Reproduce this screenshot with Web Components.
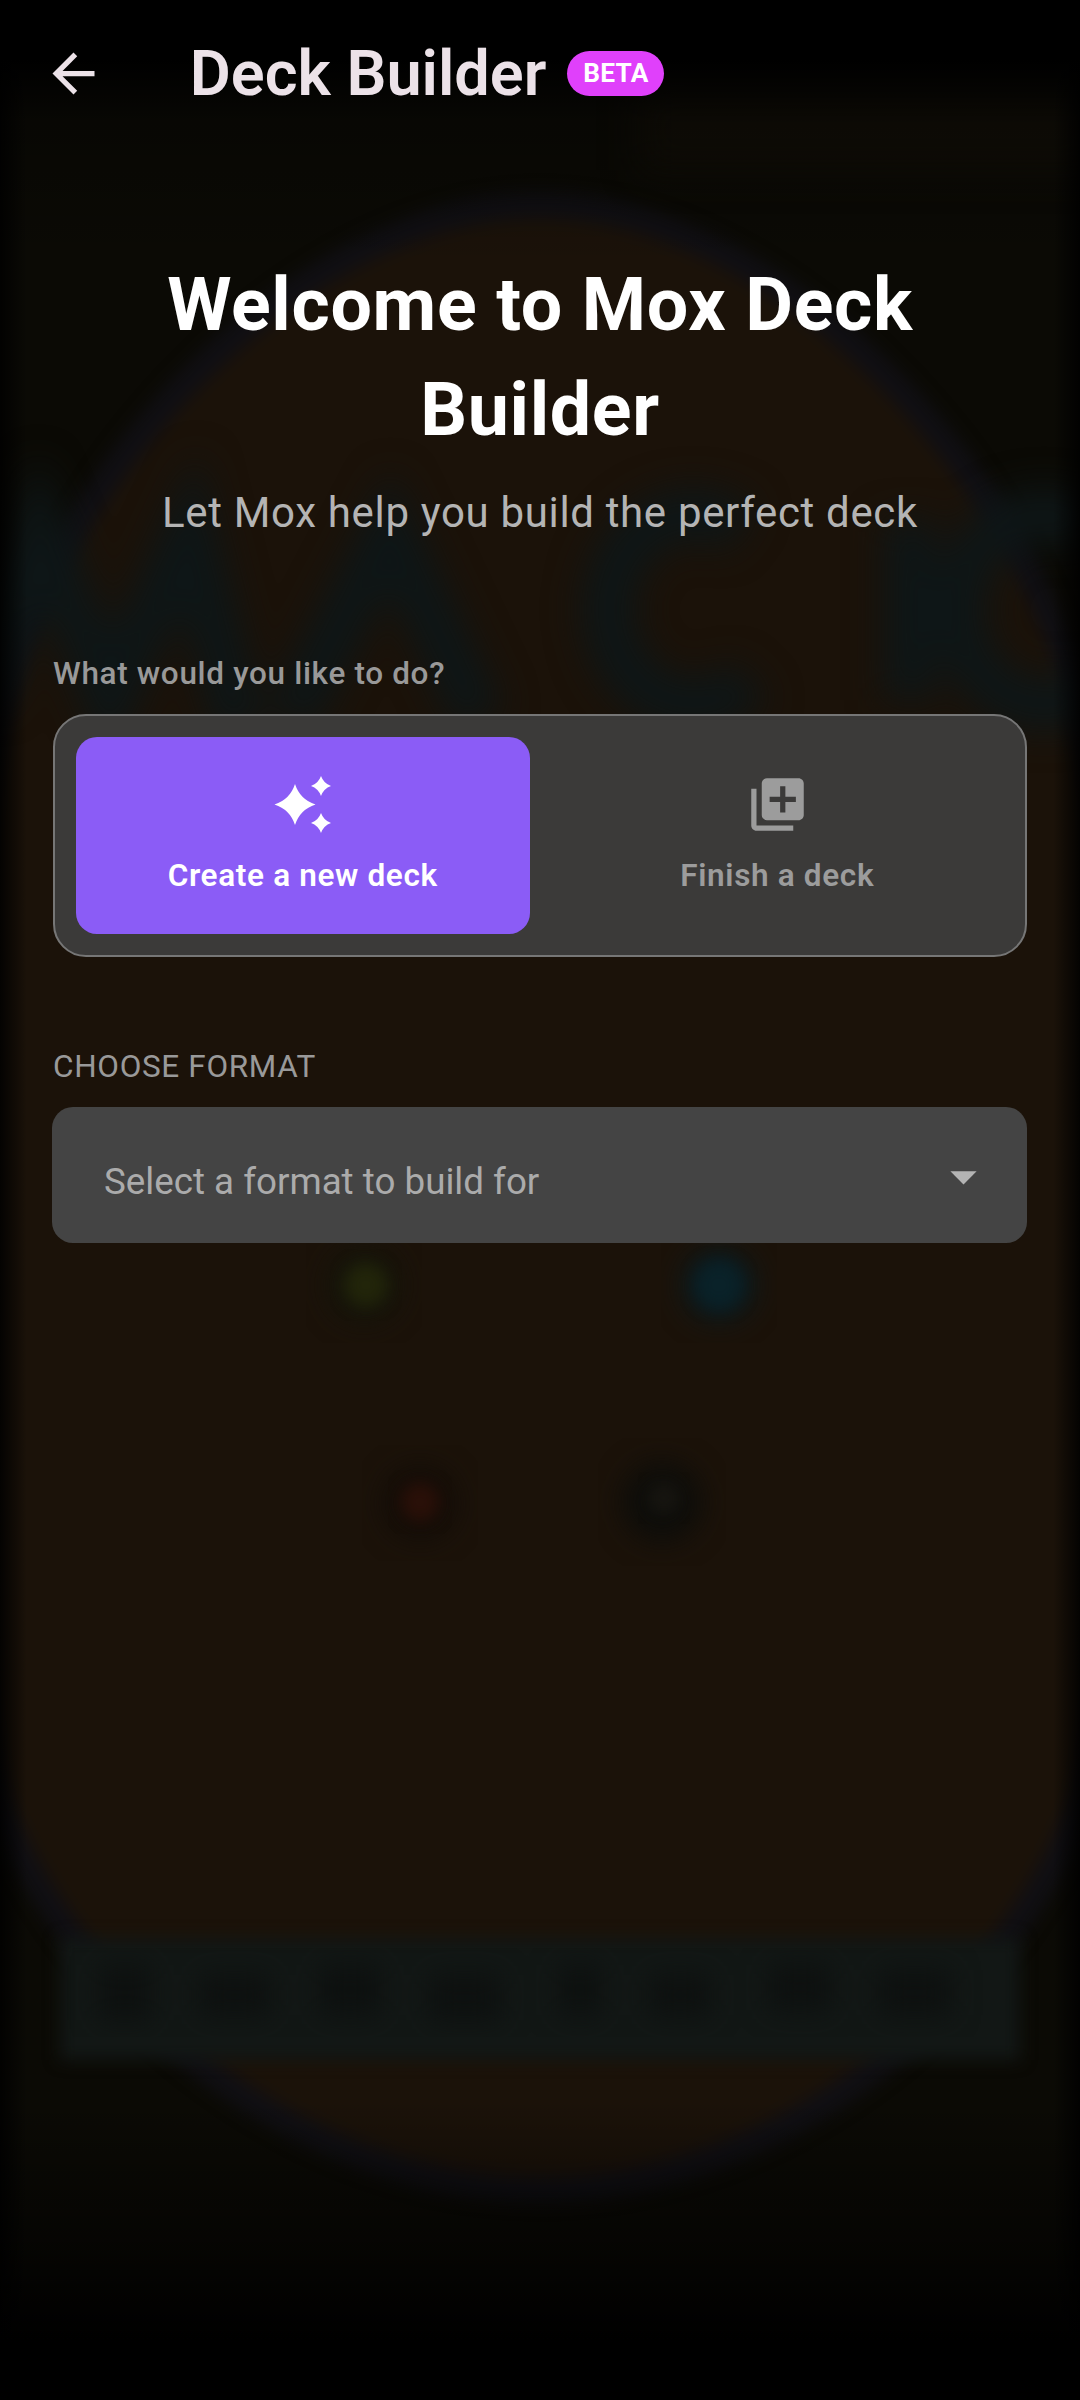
<!DOCTYPE html>
<html>
<head>
<meta charset="utf-8">
<title>Deck Builder</title>
<style>
  html, body { margin: 0; padding: 0; background: #000; }
  body { font-family: Roboto, "Noto Sans", sans-serif; width: 1080px; height: 2400px; overflow: hidden; }
</style>
</head>
<body>
<deck-screen>
  <app-bar slot="bar" heading="Deck Builder" badge="BETA"></app-bar>
  <intro-block heading="Welcome to Mox Deck Builder" sub="Let Mox help you build the perfect deck"></intro-block>
  <mode-picker label="What would you like to do?">
    <mode-option active label="Create a new deck" icon="sparkle"></mode-option>
    <mode-option label="Finish a deck" icon="library"></mode-option>
  </mode-picker>
  <format-select label="CHOOSE FORMAT" placeholder="Select a format to build for"></format-select>
</deck-screen>

<script>
(function () {
const ICONS = {
  sparkle: `<svg viewBox="0 0 63 63" width="63" height="63" fill="#fff">
    <path d="M24 11 Q29 26.5 44.5 31.5 Q29 36.5 24 52 Q19 36.5 3.5 31.5 Q19 26.5 24 11Z"/>
    <path d="M50 3 Q52.6 10.4 60 13 Q52.6 15.6 50 23 Q47.4 15.6 40 13 Q47.4 10.4 50 3Z"/>
    <path d="M50 40 Q52.6 47.4 60 50 Q52.6 52.6 50 60 Q47.4 52.6 40 50 Q47.4 47.4 50 40Z"/>
  </svg>`,
  library: `<svg viewBox="0 0 24 24" width="63" height="63" fill="#9c9c9c">
    <path d="M4 6H2v14c0 1.1.9 2 2 2h14v-2H4V6zm16-4H8c-1.1 0-2 .9-2 2v12c0 1.1.9 2 2 2h12c1.1 0 2-.9 2-2V4c0-1.1-.9-2-2-2zm-1 9h-4v4h-2v-4H9V9h4V5h2v4h4v2z"/>
  </svg>`
};

const OVAL = 'M540 205 C340 205 120 400 30 620 C-60 800 -75 1500 -5 1795 C70 2000 300 2190 540 2190 C780 2190 1010 2000 1085 1795 C1155 1500 1140 800 1050 620 C960 400 740 205 540 205Z';

// blurred card art behind everything
class CardBackdrop extends HTMLElement {
  constructor() {
    super();
    this.attachShadow({ mode: 'open' }).innerHTML = `
      <style>
        :host { position: absolute; inset: 0; display: block; z-index: 0; overflow: hidden; background: #000; }
        svg { display: block; }
      </style>
      <svg width="1080" height="2400" viewBox="0 0 1080 2400">
        <defs>
          <filter id="b8" x="-30%" y="-30%" width="160%" height="160%" color-interpolation-filters="sRGB"><feGaussianBlur stdDeviation="8"/></filter>
          <filter id="b14" x="-30%" y="-30%" width="160%" height="160%" color-interpolation-filters="sRGB"><feGaussianBlur stdDeviation="14"/></filter>
          <filter id="b18" x="-60%" y="-60%" width="220%" height="220%" color-interpolation-filters="sRGB"><feGaussianBlur stdDeviation="18"/></filter>
          <linearGradient id="shade" gradientUnits="userSpaceOnUse" x1="0" y1="0" x2="0" y2="2400">
            <stop offset="0" stop-color="#000" stop-opacity="1"/>
            <stop offset="0.025" stop-color="#000" stop-opacity="1"/>
            <stop offset="0.05" stop-color="#000" stop-opacity=".3"/>
            <stop offset="0.11" stop-color="#000" stop-opacity="0"/>
            <stop offset="0.875" stop-color="#000" stop-opacity="0"/>
            <stop offset="0.94" stop-color="#000" stop-opacity=".55"/>
            <stop offset="0.975" stop-color="#000" stop-opacity="1"/>
            <stop offset="1" stop-color="#000" stop-opacity="1"/>
          </linearGradient>
          <linearGradient id="edge" x1="0" y1="0" x2="1" y2="0">
            <stop offset="0" stop-color="#000" stop-opacity=".85"/>
            <stop offset="0.025" stop-color="#000" stop-opacity="0"/>
            <stop offset="0.975" stop-color="#000" stop-opacity="0"/>
            <stop offset="1" stop-color="#000" stop-opacity=".85"/>
          </linearGradient>
        </defs>
        <rect width="1080" height="2400" fill="#0b0a05"/>
        <rect x="640" y="90" width="460" height="80" fill="#110e07" filter="url(#b18)"/>
        <path d="${OVAL}" fill="#1b1209" stroke="#100f13" stroke-width="26" filter="url(#b8)"/>
        <g fill="none" stroke="#0e1617" stroke-width="52" filter="url(#b18)">
          <path d="M-20 700 L40 530 L110 700 L190 530 L240 730"/>
          <path d="M290 720 L390 530 L480 720"/>
          <path d="M740 530 A85 95 0 1 0 750 680"/>
          <path d="M910 520 V700"/>
          <path d="M1090 530 A85 95 0 1 0 1090 690"/>
        </g>
        <rect x="60" y="1938" width="960" height="122" fill="#121715" filter="url(#b8)"/>
        <g fill="#0d100f" filter="url(#b14)">
          <rect x="100" y="1965" width="50" height="55"/>
          <rect x="200" y="1975" width="70" height="40"/>
          <rect x="320" y="1965" width="60" height="50"/>
          <rect x="430" y="1975" width="70" height="45"/>
          <rect x="560" y="1965" width="40" height="50"/>
          <rect x="650" y="1975" width="60" height="40"/>
          <rect x="770" y="1965" width="60" height="45"/>
          <rect x="880" y="1970" width="70" height="45"/>
        </g>
        <circle cx="364" cy="1285" r="36" fill="#14140a" filter="url(#b14)"/>
        <circle cx="366" cy="1285" r="22" fill="#22250a" filter="url(#b8)"/>
        <circle cx="719" cy="1285" r="36" fill="#0b1a1e" filter="url(#b14)"/>
        <circle cx="719" cy="1285" r="24" fill="#0a2229" filter="url(#b8)"/>
        <circle cx="420" cy="1503" r="36" fill="#120c07" filter="url(#b14)"/>
        <circle cx="420" cy="1502" r="20" fill="#2a1008" filter="url(#b8)"/>
        <circle cx="662" cy="1502" r="40" fill="#0d0d0a" filter="url(#b14)"/>
        <circle cx="664" cy="1498" r="16" fill="#171510" filter="url(#b8)"/>
        <rect width="1080" height="2400" fill="url(#shade)"/>
        <rect width="1080" height="2400" fill="url(#edge)"/>
      </svg>`;
  }
}

class DeckScreen extends HTMLElement {
  constructor() {
    super();
    this.attachShadow({ mode: 'open' }).innerHTML = `
      <style>
        :host { display: block; position: relative; width: 1080px; height: 2400px; color: #fff; }
        .content { position: relative; z-index: 1; display: flex; flex-direction: column; }
        main { display: flex; flex-direction: column; padding: 0 53px; }
      </style>
      <card-backdrop></card-backdrop>
      <div class="content">
        <slot name="bar"></slot>
        <main><slot></slot></main>
      </div>`;
  }
}

class AppBar extends HTMLElement {
  constructor() {
    super();
    this.attachShadow({ mode: 'open' }).innerHTML = `
      <style>
        :host { display: flex; align-items: center; height: 147px; padding-left: 42px; box-sizing: border-box; }
        .back { width: 63px; height: 63px; display: block; flex: none; }
        .title { margin-left: 84.75px; font-size: 63px; font-weight: 600; color: #ece2e8; line-height: 70px; white-space: nowrap; }
        .badge { margin-left: 21px; height: 45px; padding: 0 15.75px; border-radius: 22.5px; background: #e040fb; color: #fff;
          font-size: 26.25px; font-weight: 700; line-height: 45px; letter-spacing: 0.3px; }
      </style>
      <svg class="back" viewBox="0 0 24 24" fill="#ece2e8"><path d="M20 11H7.83l5.59-5.59L12 4l-8 8 8 8 1.41-1.41L7.83 13H20v-2z"/></svg>
      <span class="title"></span>
      <span class="badge"></span>`;
  }
  connectedCallback() {
    this.shadowRoot.querySelector('.title').textContent = this.getAttribute('heading');
    this.shadowRoot.querySelector('.badge').textContent = this.getAttribute('badge');
  }
}

class IntroBlock extends HTMLElement {
  constructor() {
    super();
    this.attachShadow({ mode: 'open' }).innerHTML = `
      <style>
        :host { display: block; text-align: center; padding-top: 106px; }
        h1 { margin: 0; font-size: 73.5px; font-weight: 700; line-height: 105px; letter-spacing: 0.66px; color: #fff; }
        p { margin: 17.5px 0 0; font-size: 42px; line-height: 63px; letter-spacing: 0.66px; color: #b4b4b4; font-weight: 400; }
      </style>
      <h1></h1>
      <p></p>`;
  }
  connectedCallback() {
    this.shadowRoot.querySelector('h1').textContent = this.getAttribute('heading');
    this.shadowRoot.querySelector('p').textContent = this.getAttribute('sub');
  }
}

class ModePicker extends HTMLElement {
  constructor() {
    super();
    this.attachShadow({ mode: 'open' }).innerHTML = `
      <style>
        :host { display: block; margin-top: 109px; }
        .label { font-size: 31.5px; font-weight: 500; line-height: 42px; letter-spacing: 0.66px; color: #999; margin-bottom: 19.5px; }
        .box { display: grid; grid-template-columns: 1fr 1fr; gap: 21px; padding: 21px; border: 2.6px solid #767676;
          border-radius: 33px; background: #3b3a39; box-sizing: border-box; height: 243px; }
      </style>
      <div class="label"></div>
      <div class="box"><slot></slot></div>`;
  }
  connectedCallback() {
    this.shadowRoot.querySelector('.label').textContent = this.getAttribute('label');
  }
}

class ModeOption extends HTMLElement {
  constructor() {
    super();
    this.attachShadow({ mode: 'open' }).innerHTML = `
      <style>
        :host { display: flex; flex-direction: column; align-items: center; border-radius: 21px; padding-top: 36px; box-sizing: border-box; color: #9c9c9c; }
        :host([active]) { background: #8b5cf6; color: #fff; }
        svg { display: block; }
        .icon { height: 63px; }
        .text { margin-top: 19px; font-size: 31.5px; font-weight: 600; line-height: 42px; letter-spacing: 0.66px; white-space: nowrap; }
      </style>
      <div class="icon"></div>
      <div class="text"></div>`;
  }
  connectedCallback() {
    this.shadowRoot.querySelector('.icon').innerHTML = ICONS[this.getAttribute('icon')];
    this.shadowRoot.querySelector('.text').textContent = this.getAttribute('label');
  }
}

class FormatSelect extends HTMLElement {
  constructor() {
    super();
    this.attachShadow({ mode: 'open' }).innerHTML = `
      <style>
        :host { display: block; margin-top: 88.5px; }
        .label { font-size: 31.5px; font-weight: 400; line-height: 42px; letter-spacing: 0.66px; color: #999; margin-bottom: 19.5px; }
        .field { display: flex; align-items: center; justify-content: space-between; height: 135.5px; border-radius: 21px;
          background: #444; padding: 0 32px 0 52px; margin-left: -1px; box-sizing: border-box; }
        .text { font-size: 36.75px; line-height: 50px; color: #ababab; margin-top: 14px; }
        svg { display: block; margin-top: 3px; }
      </style>
      <div class="label"></div>
      <div class="field">
        <span class="text"></span>
        <svg viewBox="0 0 24 24" width="63" height="63" fill="#b4b4b4"><path d="M7 10l5 5 5-5z"/></svg>
      </div>`;
  }
  connectedCallback() {
    this.shadowRoot.querySelector('.label').textContent = this.getAttribute('label');
    this.shadowRoot.querySelector('.text').textContent = this.getAttribute('placeholder');
  }
}

customElements.define('card-backdrop', CardBackdrop);
customElements.define('deck-screen', DeckScreen);
customElements.define('app-bar', AppBar);
customElements.define('intro-block', IntroBlock);
customElements.define('mode-picker', ModePicker);
customElements.define('mode-option', ModeOption);
customElements.define('format-select', FormatSelect);
})();
</script>
</body>
</html>
